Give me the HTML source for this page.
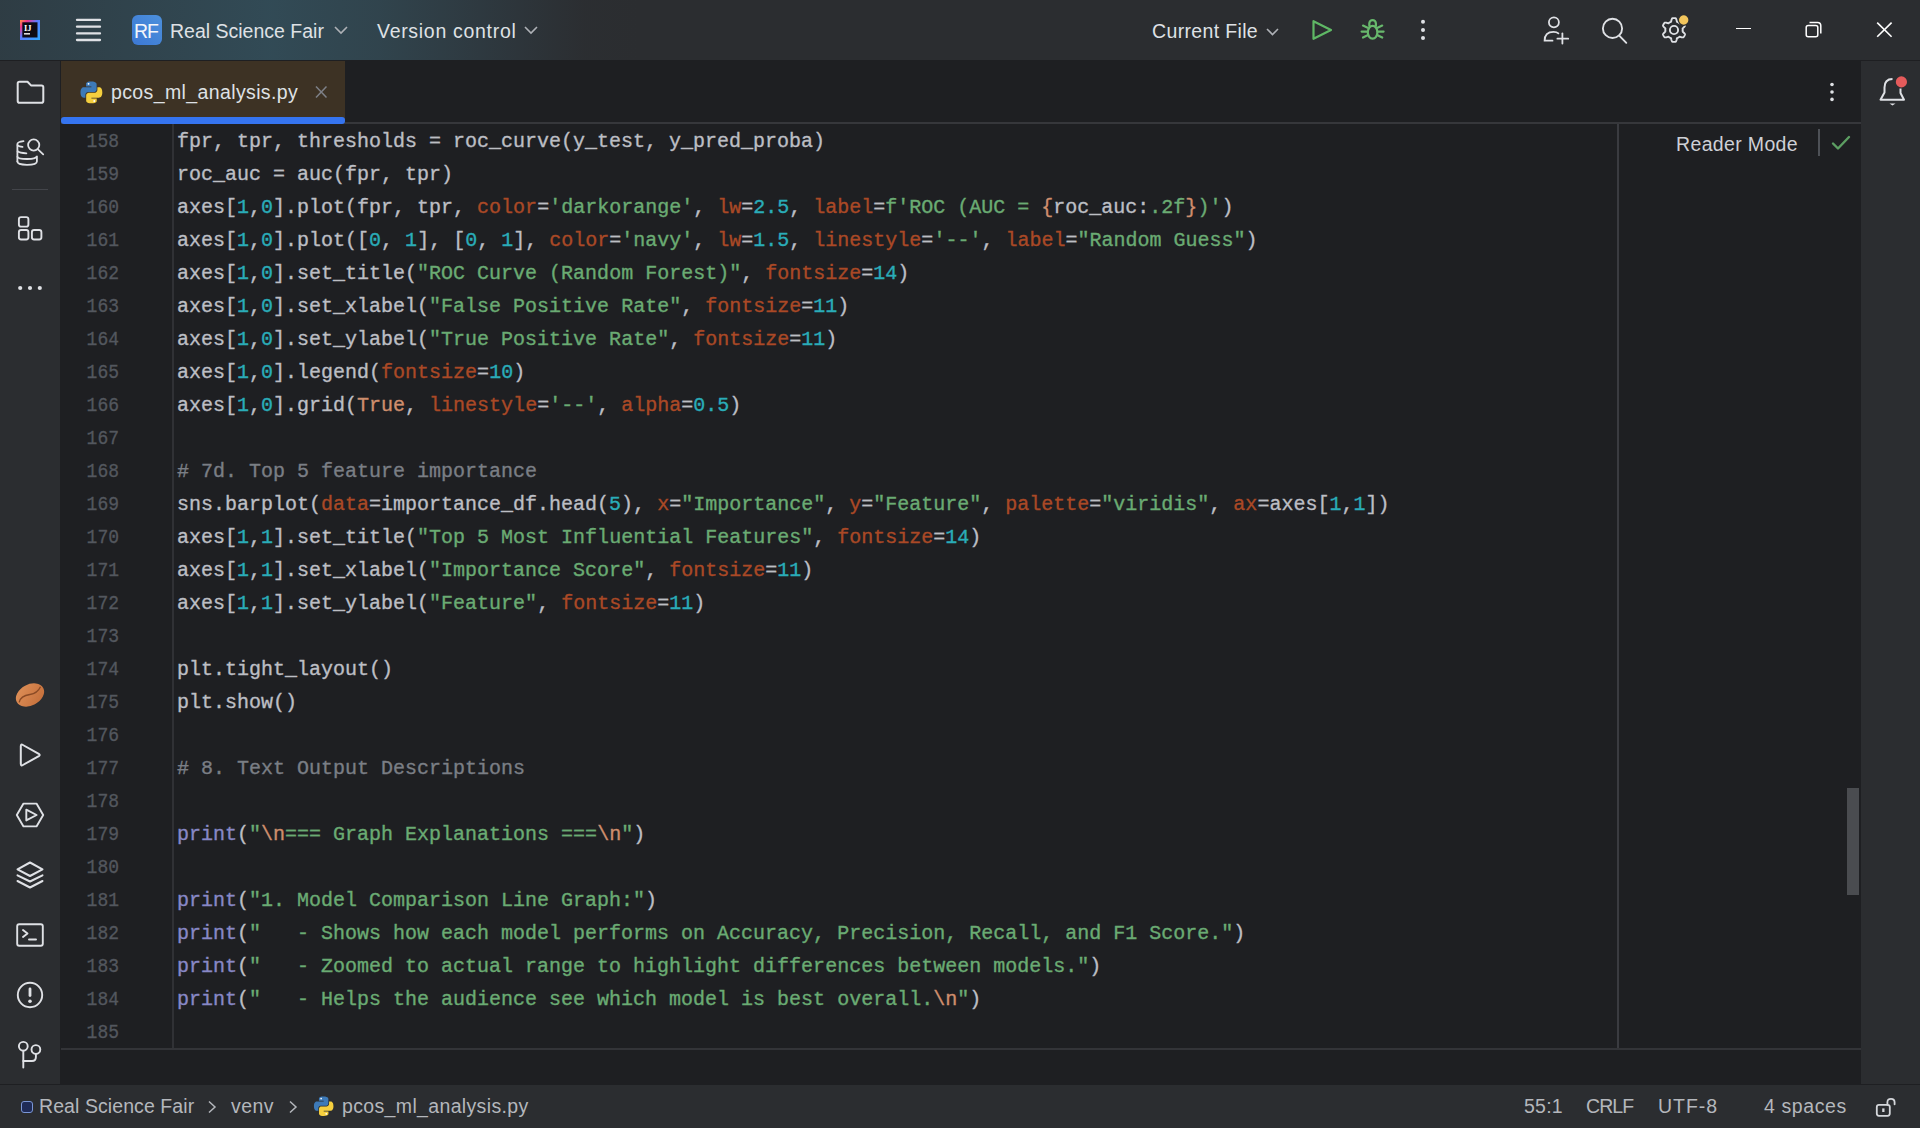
<!DOCTYPE html>
<html><head><meta charset="utf-8">
<style>
*{margin:0;padding:0;box-sizing:border-box}
html,body{width:1920px;height:1128px;overflow:hidden;background:#1E1F22;font-family:"Liberation Sans",sans-serif;position:relative}
.abs{position:absolute}
#title{left:0;top:0;width:1920px;height:60px;background:#2B2D30}
#tgrad{left:0;top:0;width:900px;height:60px;background:linear-gradient(90deg,rgba(50,76,88,0.5) 0%,rgba(52,84,98,0.75) 30%,rgba(52,82,95,0.62) 42%,rgba(50,72,84,0.35) 56%,rgba(45,52,58,0.12) 65%,rgba(43,45,48,0) 71%)}
#tline{left:0;top:60px;width:1920px;height:1px;background:#1E1F22}
#lbar{left:0;top:61px;width:60px;height:1024px;background:#2B2D30}
#lbord{left:60px;top:61px;width:1px;height:1024px;background:#1E1F22}
#rbar{left:1861px;top:61px;width:59px;height:1024px;background:#2B2D30}
#status{left:0;top:1085px;width:1920px;height:43px;background:#2B2D30}
#sline{left:0;top:1084px;width:1920px;height:1px;background:#1E1F22}
#tab{left:61px;top:61px;width:284px;height:62px;background:#3D3224}
#tabul{left:61px;top:117px;width:284px;height:6.5px;background:#3574F0;border-radius:3px}
#tabline{left:61px;top:122px;width:1800px;height:2px;background:#36373B}
.ui{color:#DFE1E5;font-size:19.5px;white-space:nowrap;line-height:20px}
.ln{position:absolute;left:61px;width:58px;text-align:right;font-family:"Liberation Mono",monospace;font-size:18px;color:#53575E;-webkit-text-stroke:0.3px currentColor;line-height:33px;height:33px;margin-top:2px;transform:scaleY(1.1);transform-origin:0 20px}
.cl{position:absolute;left:177px;font-family:"Liberation Mono",monospace;font-size:20px;color:#BCBEC4;white-space:pre;line-height:33px;height:33px;margin-top:1px;-webkit-text-stroke:0.35px currentColor}
#gut{left:172px;top:124px;width:2px;height:924px;background:#303135}
#hline{left:61px;top:1048px;width:1800px;height:2px;background:#333438}
#vline{left:1617px;top:124px;width:2px;height:924px;background:#3A3B40}
#sb{left:1847px;top:788px;width:12px;height:107px;background:#4A4C50}
.n{color:#2AACB8}.k{color:#AA4926}.s{color:#6AAB73}.o{color:#CF8E6D}.b{color:#8888C6}.c{color:#7A7E85}
svg{position:absolute;overflow:visible}
.st{color:#B4B7BC;font-size:19.5px;white-space:nowrap;line-height:20px}
</style></head><body>
<div class="abs" id="title"></div>
<div class="abs" id="tgrad"></div>
<div class="abs" id="tline"></div>
<div class="abs" id="lbar"></div>
<div class="abs" id="lbord"></div>
<div class="abs" id="rbar"></div>
<div class="abs" id="tab"></div>
<div class="abs" id="tabline"></div>
<div class="abs" id="tabul"></div>
<div class="abs" id="gut"></div>
<div class="abs" id="vline"></div>
<div class="abs" id="hline"></div>
<div class="abs" id="sb"></div>
<div class="abs" id="sline"></div>
<div class="abs" id="status"></div>

<!-- ===== TITLE BAR ===== -->
<!-- IJ logo -->
<svg style="left:20px;top:20px" width="20" height="20" viewBox="0 0 20 20">
<defs><linearGradient id="ijg" x1="0" y1="0" x2="1" y2="1"><stop offset="0" stop-color="#FF9A3C"/><stop offset="0.2" stop-color="#F0338A"/><stop offset="0.45" stop-color="#5B7BFF"/><stop offset="1" stop-color="#2FA8FF"/></linearGradient></defs>
<rect x="0" y="0" width="20" height="20" fill="url(#ijg)"/>
<rect x="2.3" y="2.3" width="15.2" height="15.2" fill="#0E0A14"/>
<text x="4" y="10.5" font-family="Liberation Serif" font-weight="bold" font-size="8.5" fill="#fff">IJ</text>
<rect x="4" y="13" width="6" height="1.6" fill="#ddd"/>
</svg>
<!-- hamburger -->
<svg style="left:76px;top:18px" width="25" height="24" viewBox="0 0 25 24">
<g stroke="#DFE1E5" stroke-width="2.3" stroke-linecap="round"><line x1="1" y1="1.9" x2="24" y2="1.9"/><line x1="1" y1="8.7" x2="24" y2="8.7"/><line x1="1" y1="15.4" x2="24" y2="15.4"/><line x1="1" y1="22" x2="24" y2="22"/></g>
</svg>
<!-- RF -->
<div class="abs" style="left:132px;top:15px;width:30px;height:30px;border-radius:6px;background:linear-gradient(45deg,#3C78D4,#4C90DC)"></div>
<div class="abs ui" style="left:132px;top:21px;width:28px;text-align:center;color:#F4F6FA;font-size:19.5px;letter-spacing:-0.9px">RF</div>
<div class="abs ui" style="left:170px;top:21px">Real Science Fair</div>
<svg style="left:334px;top:26px" width="14" height="8" viewBox="0 0 14 8"><polyline points="1,1 7,7 13,1" fill="none" stroke="#AEB1B6" stroke-width="1.6"/></svg>
<div class="abs ui" style="left:377px;top:21px;letter-spacing:0.7px">Version control</div>
<svg style="left:524px;top:26px" width="14" height="8" viewBox="0 0 14 8"><polyline points="1,1 7,7 13,1" fill="none" stroke="#AEB1B6" stroke-width="1.6"/></svg>

<div class="abs ui" style="left:1152px;top:21px;letter-spacing:0.35px">Current File</div>
<svg style="left:1266px;top:28px" width="14" height="8" viewBox="0 0 14 8"><polyline points="1,1 6.5,6.5 12,1" fill="none" stroke="#AEB1B6" stroke-width="1.6"/></svg>
<!-- run -->
<svg style="left:1310px;top:18px" width="24" height="24" viewBox="0 0 24 24"><path d="M3.5 3.2 L21 12 L3.5 20.8 Z" fill="none" stroke="#5FB865" stroke-width="2.2" stroke-linejoin="round"/></svg>
<!-- debug bug -->
<svg style="left:1352px;top:12px" width="40" height="36" viewBox="0 0 40 36">
<g fill="none" stroke="#68B86C" stroke-width="2.2" stroke-linecap="round">
<path d="M17.3 14 V11.4 A3.3 3.3 0 0 1 23.9 11.4 V14"/>
<ellipse cx="20.6" cy="20.3" rx="4.8" ry="6.4"/>
<line x1="11" y1="13.6" x2="15.6" y2="15.7"/><line x1="30.2" y1="13.6" x2="25.6" y2="15.7"/>
<line x1="9.6" y1="19.6" x2="15.6" y2="19.6"/><line x1="31.6" y1="19.6" x2="25.6" y2="19.6"/>
<line x1="11" y1="25.6" x2="15.6" y2="23.3"/><line x1="30.2" y1="25.6" x2="25.6" y2="23.3"/>
</g></svg>
<!-- kebab -->
<svg style="left:1418px;top:18px" width="10" height="24" viewBox="0 0 10 24"><g fill="#DFE1E5"><circle cx="5" cy="3.7" r="2"/><circle cx="5" cy="12" r="2"/><circle cx="5" cy="20" r="2"/></g></svg>
<!-- person add -->
<svg style="left:1540px;top:14px" width="32" height="32" viewBox="0 0 32 32">
<g fill="none" stroke="#DFE1E5" stroke-width="1.8" stroke-linecap="round">
<circle cx="13.9" cy="8.3" r="5"/>
<path d="M12.5 26.7 H4.6 Q4.6 17.8 13.5 17.8 Q16.8 17.8 18.4 19.3"/>
<line x1="17.4" y1="24.7" x2="28.2" y2="24.7"/><line x1="22.4" y1="19.4" x2="22.4" y2="29.5"/>
</g></svg>
<!-- search -->
<svg style="left:1598px;top:14px" width="32" height="32" viewBox="0 0 32 32">
<g fill="none" stroke="#DFE1E5" stroke-width="1.9" stroke-linecap="round">
<circle cx="14.5" cy="14.4" r="9.6"/><line x1="21.5" y1="21.8" x2="28.3" y2="28.8"/>
</g></svg>
<!-- gear -->
<svg style="left:1658px;top:14px" width="32" height="32" viewBox="0 0 32 32">
<g fill="none" stroke="#DFE1E5" stroke-width="1.9" stroke-linejoin="round">
<path d="M24.70 16.00 L24.70 16.23 L24.69 16.46 L24.67 16.68 L24.65 16.91 L24.63 17.14 L24.59 17.36 L24.61 17.60 L24.97 17.91 L25.34 18.24 L25.72 18.60 L26.08 18.99 L26.41 19.38 L26.72 19.79 L26.97 20.21 L26.99 20.55 L26.87 20.84 L26.74 21.12 L26.60 21.40 L26.46 21.68 L26.31 21.95 L26.15 22.22 L25.98 22.48 L25.81 22.74 L25.63 22.99 L25.44 23.24 L25.13 23.40 L24.64 23.38 L24.14 23.33 L23.62 23.23 L23.11 23.11 L22.61 22.97 L22.14 22.81 L21.68 22.66 L21.48 22.76 L21.30 22.90 L21.11 23.04 L20.93 23.17 L20.74 23.30 L20.55 23.42 L20.35 23.53 L20.15 23.65 L19.95 23.75 L19.75 23.85 L19.54 23.95 L19.33 24.04 L19.12 24.12 L18.92 24.25 L18.83 24.72 L18.73 25.21 L18.60 25.72 L18.45 26.22 L18.28 26.71 L18.07 27.18 L17.84 27.61 L17.55 27.80 L17.24 27.83 L16.93 27.86 L16.62 27.88 L16.31 27.90 L16.00 27.90 L15.69 27.90 L15.38 27.88 L15.07 27.86 L14.76 27.83 L14.45 27.80 L14.16 27.61 L13.93 27.18 L13.72 26.71 L13.55 26.22 L13.40 25.72 L13.27 25.21 L13.17 24.72 L13.08 24.25 L12.88 24.12 L12.67 24.04 L12.46 23.95 L12.25 23.85 L12.05 23.75 L11.85 23.65 L11.65 23.53 L11.45 23.42 L11.26 23.30 L11.07 23.17 L10.89 23.04 L10.70 22.90 L10.52 22.76 L10.32 22.66 L9.86 22.81 L9.39 22.97 L8.89 23.11 L8.38 23.23 L7.86 23.33 L7.36 23.38 L6.87 23.40 L6.56 23.24 L6.37 22.99 L6.19 22.74 L6.02 22.48 L5.85 22.22 L5.69 21.95 L5.54 21.68 L5.40 21.40 L5.26 21.12 L5.13 20.84 L5.01 20.55 L5.03 20.21 L5.28 19.79 L5.59 19.38 L5.92 18.99 L6.28 18.60 L6.66 18.24 L7.03 17.91 L7.39 17.60 L7.41 17.36 L7.37 17.14 L7.35 16.91 L7.33 16.68 L7.31 16.46 L7.30 16.23 L7.30 16.00 L7.30 15.77 L7.31 15.54 L7.33 15.32 L7.35 15.09 L7.37 14.86 L7.41 14.64 L7.39 14.40 L7.03 14.09 L6.66 13.76 L6.28 13.40 L5.92 13.01 L5.59 12.62 L5.28 12.21 L5.03 11.79 L5.01 11.45 L5.13 11.16 L5.26 10.88 L5.40 10.60 L5.54 10.32 L5.69 10.05 L5.85 9.78 L6.02 9.52 L6.19 9.26 L6.37 9.01 L6.56 8.76 L6.87 8.60 L7.36 8.62 L7.86 8.67 L8.38 8.77 L8.89 8.89 L9.39 9.03 L9.86 9.19 L10.32 9.34 L10.52 9.24 L10.70 9.10 L10.89 8.96 L11.07 8.83 L11.26 8.70 L11.45 8.58 L11.65 8.47 L11.85 8.35 L12.05 8.25 L12.25 8.15 L12.46 8.05 L12.67 7.96 L12.88 7.88 L13.08 7.75 L13.17 7.28 L13.27 6.79 L13.40 6.28 L13.55 5.78 L13.72 5.29 L13.93 4.82 L14.16 4.39 L14.45 4.20 L14.76 4.17 L15.07 4.14 L15.38 4.12 L15.69 4.10 L16.00 4.10 L16.31 4.10 L16.62 4.12 L16.93 4.14 L17.24 4.17 L17.55 4.20 L17.84 4.39 L18.07 4.82 L18.28 5.29 L18.45 5.78 L18.60 6.28 L18.73 6.79 L18.83 7.28 L18.92 7.75 L19.12 7.88 L19.33 7.96 L19.54 8.05 L19.75 8.15 L19.95 8.25 L20.15 8.35 L20.35 8.47 L20.55 8.58 L20.74 8.70 L20.93 8.83 L21.11 8.96 L21.30 9.10 L21.48 9.24 L21.68 9.34 L22.14 9.19 L22.61 9.03 L23.11 8.89 L23.62 8.77 L24.14 8.67 L24.64 8.62 L25.13 8.60 L25.44 8.76 L25.63 9.01 L25.81 9.26 L25.98 9.52 L26.15 9.78 L26.31 10.05 L26.46 10.32 L26.60 10.60 L26.74 10.88 L26.87 11.16 L26.99 11.45 L26.97 11.79 L26.72 12.21 L26.41 12.62 L26.08 13.01 L25.72 13.40 L25.34 13.76 L24.97 14.09 L24.61 14.40 L24.59 14.64 L24.63 14.86 L24.65 15.09 L24.67 15.32 L24.69 15.54 L24.70 15.77 Z"/>
<circle cx="16" cy="16" r="4.1"/>
</g>
<circle cx="25.7" cy="6" r="5.3" fill="#F2C55C" stroke="#2B2D30" stroke-width="1.2"/>
</svg>
<!-- window controls -->
<div class="abs" style="left:1736px;top:28.2px;width:15px;height:1.3px;background:#fff"></div>
<svg style="left:1804px;top:20px" width="20" height="20" viewBox="0 0 20 20">
<g fill="none" stroke="#fff" stroke-width="1.5"><rect x="2.2" y="5.4" width="11.6" height="11.4" rx="2"/><path d="M5.5 2.4 H13.5 Q16.8 2.4 16.8 5.7 V13.5"/></g></svg>
<svg style="left:1874px;top:20px" width="20" height="20" viewBox="0 0 20 20"><g stroke="#fff" stroke-width="1.6"><line x1="3.2" y1="2.6" x2="17.6" y2="16.8"/><line x1="17.6" y1="2.6" x2="3.2" y2="16.8"/></g></svg>

<!-- ===== TAB ===== -->
<svg style="left:80px;top:81px" width="23" height="23" viewBox="0 0 23 23" id="pyicon1">
<g transform="scale(0.95)">
<path d="M11.8 0.5 C6 0.5 6.4 3 6.4 3 V5.7 H12 V6.5 H4.2 C4.2 6.5 0.5 6.1 0.5 11.9 C0.5 17.7 3.7 17.5 3.7 17.5 H5.7 V14.8 C5.7 14.8 5.6 11.6 8.9 11.6 H14.4 C14.4 11.6 17.5 11.7 17.5 8.6 V3.5 C17.5 3.5 18 0.5 11.8 0.5 Z" fill="#3D7AB8"/>
<path d="M12.2 23.5 C18 23.5 17.6 21 17.6 21 V18.3 H12 V17.5 H19.8 C19.8 17.5 23.5 17.9 23.5 12.1 C23.5 6.3 20.3 6.5 20.3 6.5 H18.3 V9.2 C18.3 9.2 18.4 12.4 15.1 12.4 H9.6 C9.6 12.4 6.5 12.3 6.5 15.4 V20.5 C6.5 20.5 6 23.5 12.2 23.5 Z" fill="#F5CF3E"/>
<circle cx="9" cy="3" r="1" fill="#fff"/><circle cx="15" cy="21" r="1" fill="#fff"/>
</g></svg>
<div class="abs ui" style="left:111px;top:82px;letter-spacing:0.38px">pcos_ml_analysis.py</div>
<svg style="left:314px;top:85px" width="14" height="14" viewBox="0 0 14 14"><g stroke="#7E8188" stroke-width="1.5"><line x1="2" y1="1.5" x2="12.5" y2="12.5"/><line x1="12.5" y1="1.5" x2="2" y2="12.5"/></g></svg>
<svg style="left:1827px;top:80px" width="10" height="24" viewBox="0 0 10 24"><g fill="#DFE1E5"><circle cx="5" cy="4.5" r="1.8"/><circle cx="5" cy="12" r="1.8"/><circle cx="5" cy="19.4" r="1.8"/></g></svg>

<!-- Reader mode -->
<div class="abs ui" style="left:1676px;top:134px;color:#CED0D6;letter-spacing:0.35px">Reader Mode</div>
<div class="abs" style="left:1818px;top:129px;width:1.5px;height:27px;background:#4E5157"></div>
<svg style="left:1830px;top:134px" width="22" height="18" viewBox="0 0 22 18"><polyline points="3,9.5 8,14.5 19,3" fill="none" stroke="#5C9E62" stroke-width="2.4" stroke-linecap="round" stroke-linejoin="round"/></svg>

<!-- ===== LEFT BAR ICONS ===== -->
<!-- folder -->
<svg style="left:15px;top:79px" width="30" height="26" viewBox="0 0 30 26">
<path d="M2.7 4.5 Q2.7 2.7 4.5 2.7 H12.5 L16 6.4 H26.5 Q28.3 6.4 28.3 8.2 V21.9 Q28.3 23.7 26.5 23.7 H4.5 Q2.7 23.7 2.7 21.9 Z" fill="none" stroke="#DFE1E5" stroke-width="2" stroke-linejoin="round"/>
</svg>
<!-- db search -->
<svg style="left:12px;top:134px" width="36" height="36" viewBox="0 0 36 36">
<g fill="none" stroke="#DFE1E5" stroke-width="1.8" stroke-linecap="round">
<path d="M5.4 27.5 V10 Q5.4 8 11.5 7.2"/>
<path d="M5.6 11.3 Q6.5 12.6 10.5 12.9"/>
<path d="M5.6 17.3 Q7.5 18.9 14.4 19.3"/>
<path d="M5.4 22.8 Q6 25 15 25 Q24.9 25 24.9 21.7 V27.5 Q24.9 30.8 15 30.8 Q5.4 30.8 5.4 27.5"/>
<circle cx="21.7" cy="11" r="5.6"/><line x1="26" y1="15.4" x2="31.2" y2="20.3"/>
</g></svg>
<div class="abs" style="left:12px;top:189px;width:36px;height:1px;background:#43454A"></div>
<!-- structure -->
<svg style="left:14px;top:212px" width="32" height="32" viewBox="0 0 32 32">
<g fill="none" stroke="#DFE1E5" stroke-width="1.9"><rect x="4.9" y="5.1" width="9.5" height="9.5" rx="2.2"/><rect x="4.9" y="18" width="9.5" height="9.5" rx="2.2"/><rect x="17.9" y="18" width="9.5" height="9.5" rx="2.2"/></g></svg>
<!-- more dots -->
<svg style="left:14px;top:272px" width="32" height="32" viewBox="0 0 32 32"><g fill="#DFE1E5"><circle cx="6.2" cy="16" r="2.1"/><circle cx="16" cy="16" r="2.1"/><circle cx="25.8" cy="16" r="2.1"/></g></svg>

<!-- bean -->
<svg style="left:14px;top:679px" width="32" height="32" viewBox="0 0 32 32">
<defs><linearGradient id="bean" x1="0" y1="0" x2="1" y2="1"><stop offset="0" stop-color="#E0925A"/><stop offset="1" stop-color="#C26C38"/></linearGradient></defs>
<ellipse cx="16" cy="16" rx="15" ry="10.5" transform="rotate(-28 16 16)" fill="url(#bean)"/>
<path d="M5.2 23.3 Q6.5 16.8 15.9 15.5 Q23.5 14.3 26.5 7.7" fill="none" stroke="#8A4A25" stroke-width="1.3"/>
</svg>
<!-- run -->
<svg style="left:14px;top:739px" width="32" height="32" viewBox="0 0 32 32"><path d="M6.8 7.2 Q6.8 4.8 8.9 6 L24.8 14.9 Q26.6 16 24.8 17.1 L8.9 26 Q6.8 27.2 6.8 24.8 Z" fill="none" stroke="#DFE1E5" stroke-width="2" stroke-linejoin="round"/></svg>
<!-- services -->
<svg style="left:14px;top:799px" width="32" height="32" viewBox="0 0 32 32">
<g fill="none" stroke="#DFE1E5" stroke-width="1.9" stroke-linejoin="round"><path d="M9.5 4.6 H22.5 L29.2 16 L22.5 27.4 H9.5 L2.8 16 Z"/><path d="M12.3 10.6 L22.6 16 L12.3 21.4 Z"/></g></svg>
<!-- layers -->
<svg style="left:14px;top:859px" width="32" height="32" viewBox="0 0 32 32">
<g fill="none" stroke="#DFE1E5" stroke-width="2" stroke-linejoin="round" stroke-linecap="round"><path d="M16 3.5 L28.5 10.3 L16 17 L3.5 10.3 Z"/><path d="M3.5 16.3 L16 22.5 L28.5 16.3"/><path d="M3.5 22 L16 28.5 L28.5 22"/></g></svg>
<!-- terminal -->
<svg style="left:14px;top:919px" width="32" height="32" viewBox="0 0 32 32">
<g fill="none" stroke="#DFE1E5" stroke-width="1.9" stroke-linecap="round" stroke-linejoin="round"><rect x="3.2" y="5.2" width="25.6" height="21.5" rx="2"/><polyline points="9,11 13.5,14.5 9,18"/><line x1="15" y1="20.5" x2="22" y2="20.5"/></g></svg>
<!-- problems -->
<svg style="left:14px;top:979px" width="32" height="32" viewBox="0 0 32 32">
<g fill="none" stroke="#DFE1E5" stroke-width="1.9"><circle cx="16" cy="16" r="12.2"/></g><rect x="14.6" y="8.5" width="2.8" height="9.5" rx="1.4" fill="#DFE1E5"/><circle cx="16" cy="22.2" r="1.8" fill="#DFE1E5"/></svg>
<!-- git -->
<svg style="left:14px;top:1039px" width="32" height="32" viewBox="0 0 32 32">
<g fill="none" stroke="#DFE1E5" stroke-width="1.9" stroke-linecap="round"><circle cx="9.3" cy="7.3" r="4.4"/><circle cx="21.9" cy="10.5" r="4.4"/><line x1="9.3" y1="11.7" x2="9.3" y2="28.5"/><path d="M9.3 22 H18 Q21.9 22 21.9 18 V14.9"/></g></svg>

<!-- ===== RIGHT BAR ===== -->
<svg style="left:1876px;top:74px" width="32" height="34" viewBox="0 0 32 34">
<g fill="none" stroke="#DFE1E5" stroke-width="2" stroke-linejoin="round"><path d="M16.5 5 Q8.5 5 8.5 13.5 V18.5 L4.5 25.7 H28 L24.5 19 V14.5"/></g>
<path d="M13.5 29.5 H19.5 L16.5 31.5 Z" fill="#DFE1E5"/>
<circle cx="25.4" cy="7.9" r="5.6" fill="#E55B5B"/>
</svg>

<!-- ===== STATUS BAR ===== -->
<div class="abs" style="left:21px;top:1101px;width:12px;height:12px;border:1.9px solid #7A96D6;border-radius:3px;background:#1F2B57"></div>
<div class="abs st" style="left:39px;top:1096px;letter-spacing:0.08px">Real Science Fair</div>
<svg style="left:207px;top:1100px" width="10" height="14" viewBox="0 0 10 14"><polyline points="2,1.5 8,7 2,12.5" fill="none" stroke="#B4B7BC" stroke-width="1.5"/></svg>
<div class="abs st" style="left:231px;top:1096px;letter-spacing:0.43px">venv</div>
<svg style="left:288px;top:1100px" width="10" height="14" viewBox="0 0 10 14"><polyline points="2,1.5 8,7 2,12.5" fill="none" stroke="#B4B7BC" stroke-width="1.5"/></svg>
<svg style="left:313px;top:1096px" width="22" height="21" viewBox="0 0 23 23" id="pyicon2">
<g transform="scale(0.93)">
<path d="M11.8 0.5 C6 0.5 6.4 3 6.4 3 V5.7 H12 V6.5 H4.2 C4.2 6.5 0.5 6.1 0.5 11.9 C0.5 17.7 3.7 17.5 3.7 17.5 H5.7 V14.8 C5.7 14.8 5.6 11.6 8.9 11.6 H14.4 C14.4 11.6 17.5 11.7 17.5 8.6 V3.5 C17.5 3.5 18 0.5 11.8 0.5 Z" fill="#3D7AB8"/>
<path d="M12.2 23.5 C18 23.5 17.6 21 17.6 21 V18.3 H12 V17.5 H19.8 C19.8 17.5 23.5 17.9 23.5 12.1 C23.5 6.3 20.3 6.5 20.3 6.5 H18.3 V9.2 C18.3 9.2 18.4 12.4 15.1 12.4 H9.6 C9.6 12.4 6.5 12.3 6.5 15.4 V20.5 C6.5 20.5 6 23.5 12.2 23.5 Z" fill="#F5CF3E"/>
<circle cx="9" cy="3" r="1" fill="#fff"/><circle cx="15" cy="21" r="1" fill="#fff"/>
</g></svg>
<div class="abs st" style="left:342px;top:1096px;letter-spacing:0.35px">pcos_ml_analysis.py</div>
<div class="abs st" style="left:1524px;top:1096px;letter-spacing:0.25px">55:1</div>
<div class="abs st" style="left:1586px;top:1096px;letter-spacing:-0.9px">CRLF</div>
<div class="abs st" style="left:1658px;top:1096px;letter-spacing:0.96px">UTF-8</div>
<div class="abs st" style="left:1764px;top:1096px;letter-spacing:0.61px">4 spaces</div>
<svg style="left:1872.5px;top:1094px" width="26" height="24" viewBox="0 0 26 24">
<g fill="none" stroke="#D5D7DB" stroke-width="1.8" stroke-linecap="round"><rect x="3.8" y="10.8" width="13" height="11" rx="2.2"/><path d="M14.4 10.8 V8.3 Q14.4 4.8 18 4.8 Q21.6 4.8 21.6 8.3 V10.3"/></g>
<rect x="9.2" y="14.4" width="2.3" height="3.6" fill="#D5D7DB"/></svg>

<!-- ===== CODE ===== -->
<div class="ln" style="top:124px">158</div><div class="cl" style="top:124px">fpr, tpr, thresholds = roc_curve(y_test, y_pred_proba)</div>
<div class="ln" style="top:157px">159</div><div class="cl" style="top:157px">roc_auc = auc(fpr, tpr)</div>
<div class="ln" style="top:190px">160</div><div class="cl" style="top:190px">axes[<span class="n">1</span>,<span class="n">0</span>].plot(fpr, tpr, <span class="k">color</span>=<span class="s">'darkorange'</span>, <span class="k">lw</span>=<span class="n">2.5</span>, <span class="k">label</span>=<span class="s">f'ROC (AUC = </span><span class="o">{</span>roc_auc:<span class="s">.2f</span><span class="o">}</span><span class="s">)'</span>)</div>
<div class="ln" style="top:223px">161</div><div class="cl" style="top:223px">axes[<span class="n">1</span>,<span class="n">0</span>].plot([<span class="n">0</span>, <span class="n">1</span>], [<span class="n">0</span>, <span class="n">1</span>], <span class="k">color</span>=<span class="s">'navy'</span>, <span class="k">lw</span>=<span class="n">1.5</span>, <span class="k">linestyle</span>=<span class="s">'--'</span>, <span class="k">label</span>=<span class="s">"Random Guess"</span>)</div>
<div class="ln" style="top:256px">162</div><div class="cl" style="top:256px">axes[<span class="n">1</span>,<span class="n">0</span>].set_title(<span class="s">"ROC Curve (Random Forest)"</span>, <span class="k">fontsize</span>=<span class="n">14</span>)</div>
<div class="ln" style="top:289px">163</div><div class="cl" style="top:289px">axes[<span class="n">1</span>,<span class="n">0</span>].set_xlabel(<span class="s">"False Positive Rate"</span>, <span class="k">fontsize</span>=<span class="n">11</span>)</div>
<div class="ln" style="top:322px">164</div><div class="cl" style="top:322px">axes[<span class="n">1</span>,<span class="n">0</span>].set_ylabel(<span class="s">"True Positive Rate"</span>, <span class="k">fontsize</span>=<span class="n">11</span>)</div>
<div class="ln" style="top:355px">165</div><div class="cl" style="top:355px">axes[<span class="n">1</span>,<span class="n">0</span>].legend(<span class="k">fontsize</span>=<span class="n">10</span>)</div>
<div class="ln" style="top:388px">166</div><div class="cl" style="top:388px">axes[<span class="n">1</span>,<span class="n">0</span>].grid(<span class="o">True</span>, <span class="k">linestyle</span>=<span class="s">'--'</span>, <span class="k">alpha</span>=<span class="n">0.5</span>)</div>
<div class="ln" style="top:421px">167</div><div class="cl" style="top:421px"></div>
<div class="ln" style="top:454px">168</div><div class="cl" style="top:454px"><span class="c"># 7d. Top 5 feature importance</span></div>
<div class="ln" style="top:487px">169</div><div class="cl" style="top:487px">sns.barplot(<span class="k">data</span>=importance_df.head(<span class="n">5</span>), <span class="k">x</span>=<span class="s">"Importance"</span>, <span class="k">y</span>=<span class="s">"Feature"</span>, <span class="k">palette</span>=<span class="s">"viridis"</span>, <span class="k">ax</span>=axes[<span class="n">1</span>,<span class="n">1</span>])</div>
<div class="ln" style="top:520px">170</div><div class="cl" style="top:520px">axes[<span class="n">1</span>,<span class="n">1</span>].set_title(<span class="s">"Top 5 Most Influential Features"</span>, <span class="k">fontsize</span>=<span class="n">14</span>)</div>
<div class="ln" style="top:553px">171</div><div class="cl" style="top:553px">axes[<span class="n">1</span>,<span class="n">1</span>].set_xlabel(<span class="s">"Importance Score"</span>, <span class="k">fontsize</span>=<span class="n">11</span>)</div>
<div class="ln" style="top:586px">172</div><div class="cl" style="top:586px">axes[<span class="n">1</span>,<span class="n">1</span>].set_ylabel(<span class="s">"Feature"</span>, <span class="k">fontsize</span>=<span class="n">11</span>)</div>
<div class="ln" style="top:619px">173</div><div class="cl" style="top:619px"></div>
<div class="ln" style="top:652px">174</div><div class="cl" style="top:652px">plt.tight_layout()</div>
<div class="ln" style="top:685px">175</div><div class="cl" style="top:685px">plt.show()</div>
<div class="ln" style="top:718px">176</div><div class="cl" style="top:718px"></div>
<div class="ln" style="top:751px">177</div><div class="cl" style="top:751px"><span class="c"># 8. Text Output Descriptions</span></div>
<div class="ln" style="top:784px">178</div><div class="cl" style="top:784px"></div>
<div class="ln" style="top:817px">179</div><div class="cl" style="top:817px"><span class="b">print</span>(<span class="s">"</span><span class="o">\n</span><span class="s">=== Graph Explanations ===</span><span class="o">\n</span><span class="s">"</span>)</div>
<div class="ln" style="top:850px">180</div><div class="cl" style="top:850px"></div>
<div class="ln" style="top:883px">181</div><div class="cl" style="top:883px"><span class="b">print</span>(<span class="s">"1. Model Comparison Line Graph:"</span>)</div>
<div class="ln" style="top:916px">182</div><div class="cl" style="top:916px"><span class="b">print</span>(<span class="s">"   - Shows how each model performs on Accuracy, Precision, Recall, and F1 Score."</span>)</div>
<div class="ln" style="top:949px">183</div><div class="cl" style="top:949px"><span class="b">print</span>(<span class="s">"   - Zoomed to actual range to highlight differences between models."</span>)</div>
<div class="ln" style="top:982px">184</div><div class="cl" style="top:982px"><span class="b">print</span>(<span class="s">"   - Helps the audience see which model is best overall.</span><span class="o">\n</span><span class="s">"</span>)</div>
<div class="ln" style="top:1015px">185</div><div class="cl" style="top:1015px"></div>
</body></html>
